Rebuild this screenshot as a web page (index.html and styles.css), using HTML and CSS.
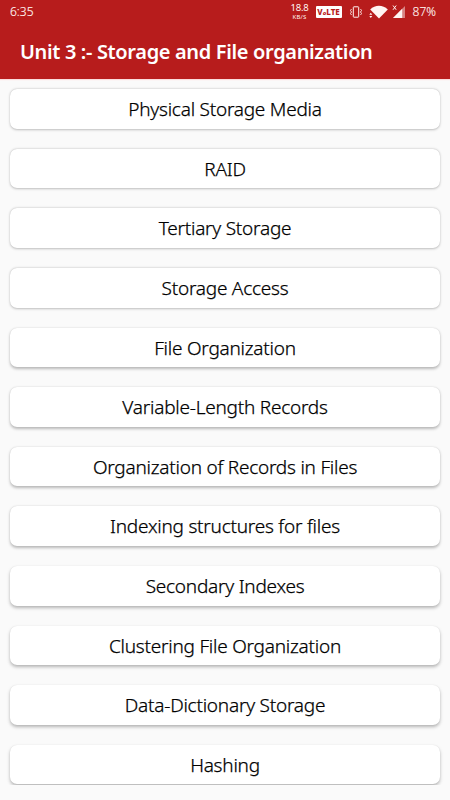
FILE: index.html
```html
<!DOCTYPE html>
<html lang="en">
<head>
<meta charset="utf-8">
<title>Unit 3</title>
<link rel="stylesheet" href="styles.css">
</head>
<body>
<header class="appbar">
  <div class="status">
    <span class="clock">6:35</span>
    <div class="indicators">
      <span class="speed"><b>18.8</b><small>KB/S</small></span>
      <span class="volte">V<i>o</i>LTE</span>
      <svg class="vibrate" width="14" height="12" viewBox="0 0 14 12" fill="none" stroke="currentColor"><rect x="4.3" y=".8" width="5.4" height="10.4" rx=".6" stroke-width="1"/><path d="M2.5 3 1.5 4.5 2.5 6 1.5 7.5 2.5 9M11.5 3l1 1.5-1 1.5 1 1.5-1 1.5" stroke-width=".9"/></svg>
      <svg class="wifi" width="19" height="14" viewBox="0 0 19 14" fill="currentColor"><path d="M1.2 4.4C6-.4 13.8-.4 18.8 4.4L10 13.4Z"/><path d="M.3 9.8 1.8 7.8 3.3 9.8ZM.3 11 1.8 13 3.3 11Z"/></svg>
      <svg class="signal" width="14" height="14" viewBox="0 0 14 14"><path d="M13 1V13H1Z" fill="#d78282"/><path d="M10.2 3.8V13H1Z" fill="currentColor"/><path d="m1 .5 3.2 4.3M4.2.5 1 4.8" stroke="currentColor"/></svg>
      <span class="battery">87%</span>
    </div>
  </div>
  <h1>Unit 3 :- Storage and File organization</h1>
</header>
<main class="list">
  <div class="card">Physical Storage Media</div>
  <div class="card">RAID</div>
  <div class="card">Tertiary Storage</div>
  <div class="card">Storage Access</div>
  <div class="card">File Organization</div>
  <div class="card">Variable-Length Records</div>
  <div class="card">Organization of Records in Files</div>
  <div class="card">Indexing structures for files</div>
  <div class="card">Secondary Indexes</div>
  <div class="card">Clustering File Organization</div>
  <div class="card">Data-Dictionary Storage</div>
  <div class="card">Hashing</div>
</main>
</body>
</html>
```
FILE: styles.css
```css
* { box-sizing: border-box; }
body {
  margin: 0;
  height: 800px;
  overflow: hidden;
  background: #fafafa;
  color: #000;
  font-family: "Noto Sans", sans-serif;
}
.appbar { height: 79px; background: #b71c1c; color: #fff; box-shadow: 0 1px 1px #fbdcdc; }
.status {
  height: 24px;
  padding: 0 14px 0 10px;
  display: flex;
  align-items: center;
  justify-content: space-between;
  color: #fff4f2;
}
.clock, .battery { font-size: 12px; line-height: 24px; font-weight: 300; -webkit-text-stroke: .15px; }
.indicators { display: flex; align-items: center; }
.speed { display: flex; flex-direction: column; align-items: center; width: 20px; margin: -2px 6px 0 0; }
.speed b { font-size: 9.5px; line-height: 11px; font-weight: 400; letter-spacing: -.2px; }
.speed small { font-size: 6px; line-height: 8px; letter-spacing: .2px; }
.volte {
  width: 26px; height: 12px; margin-right: 7px;
  border-radius: 1px; background: #fff; color: #b71c1c;
  font-size: 8px; line-height: 12px; font-weight: 800; text-align: center;
}
.volte i { font-size: 6px; }
.vibrate { margin-right: 6px; }
.wifi { margin-right: 4px; }
.signal { margin-right: 7px; }
h1 { margin: 13px 0 0 20px; font-size: 20px; line-height: 30px; font-weight: 600; letter-spacing: -.35px; white-space: nowrap; }
.list {
  height: 706px;
  padding: 10.3px 10px 0;
  display: flex;
  flex-direction: column;
  gap: 20.1px;
  overflow: hidden;
}
.card {
  flex: none;
  height: 39.5px;
  border-radius: 7px;
  background: #fff;
  box-shadow: 0 1.5px 3px rgba(0,0,0,.26), 0 0 1px rgba(0,0,0,.12);
  font-size: 19px;
  line-height: 41px;
  font-weight: 300;
  letter-spacing: -.23px;
  -webkit-text-stroke: .25px;
  text-align: center;
  white-space: nowrap;
}
.card:nth-child(-n+4) { box-shadow: 0 .5px 2.5px rgba(0,0,0,.24), 0 0 1px rgba(0,0,0,.12); }
.card:nth-child(n+9) { box-shadow: 0 2px 3.5px rgba(0,0,0,.28), 0 0 1px rgba(0,0,0,.1); }
```
